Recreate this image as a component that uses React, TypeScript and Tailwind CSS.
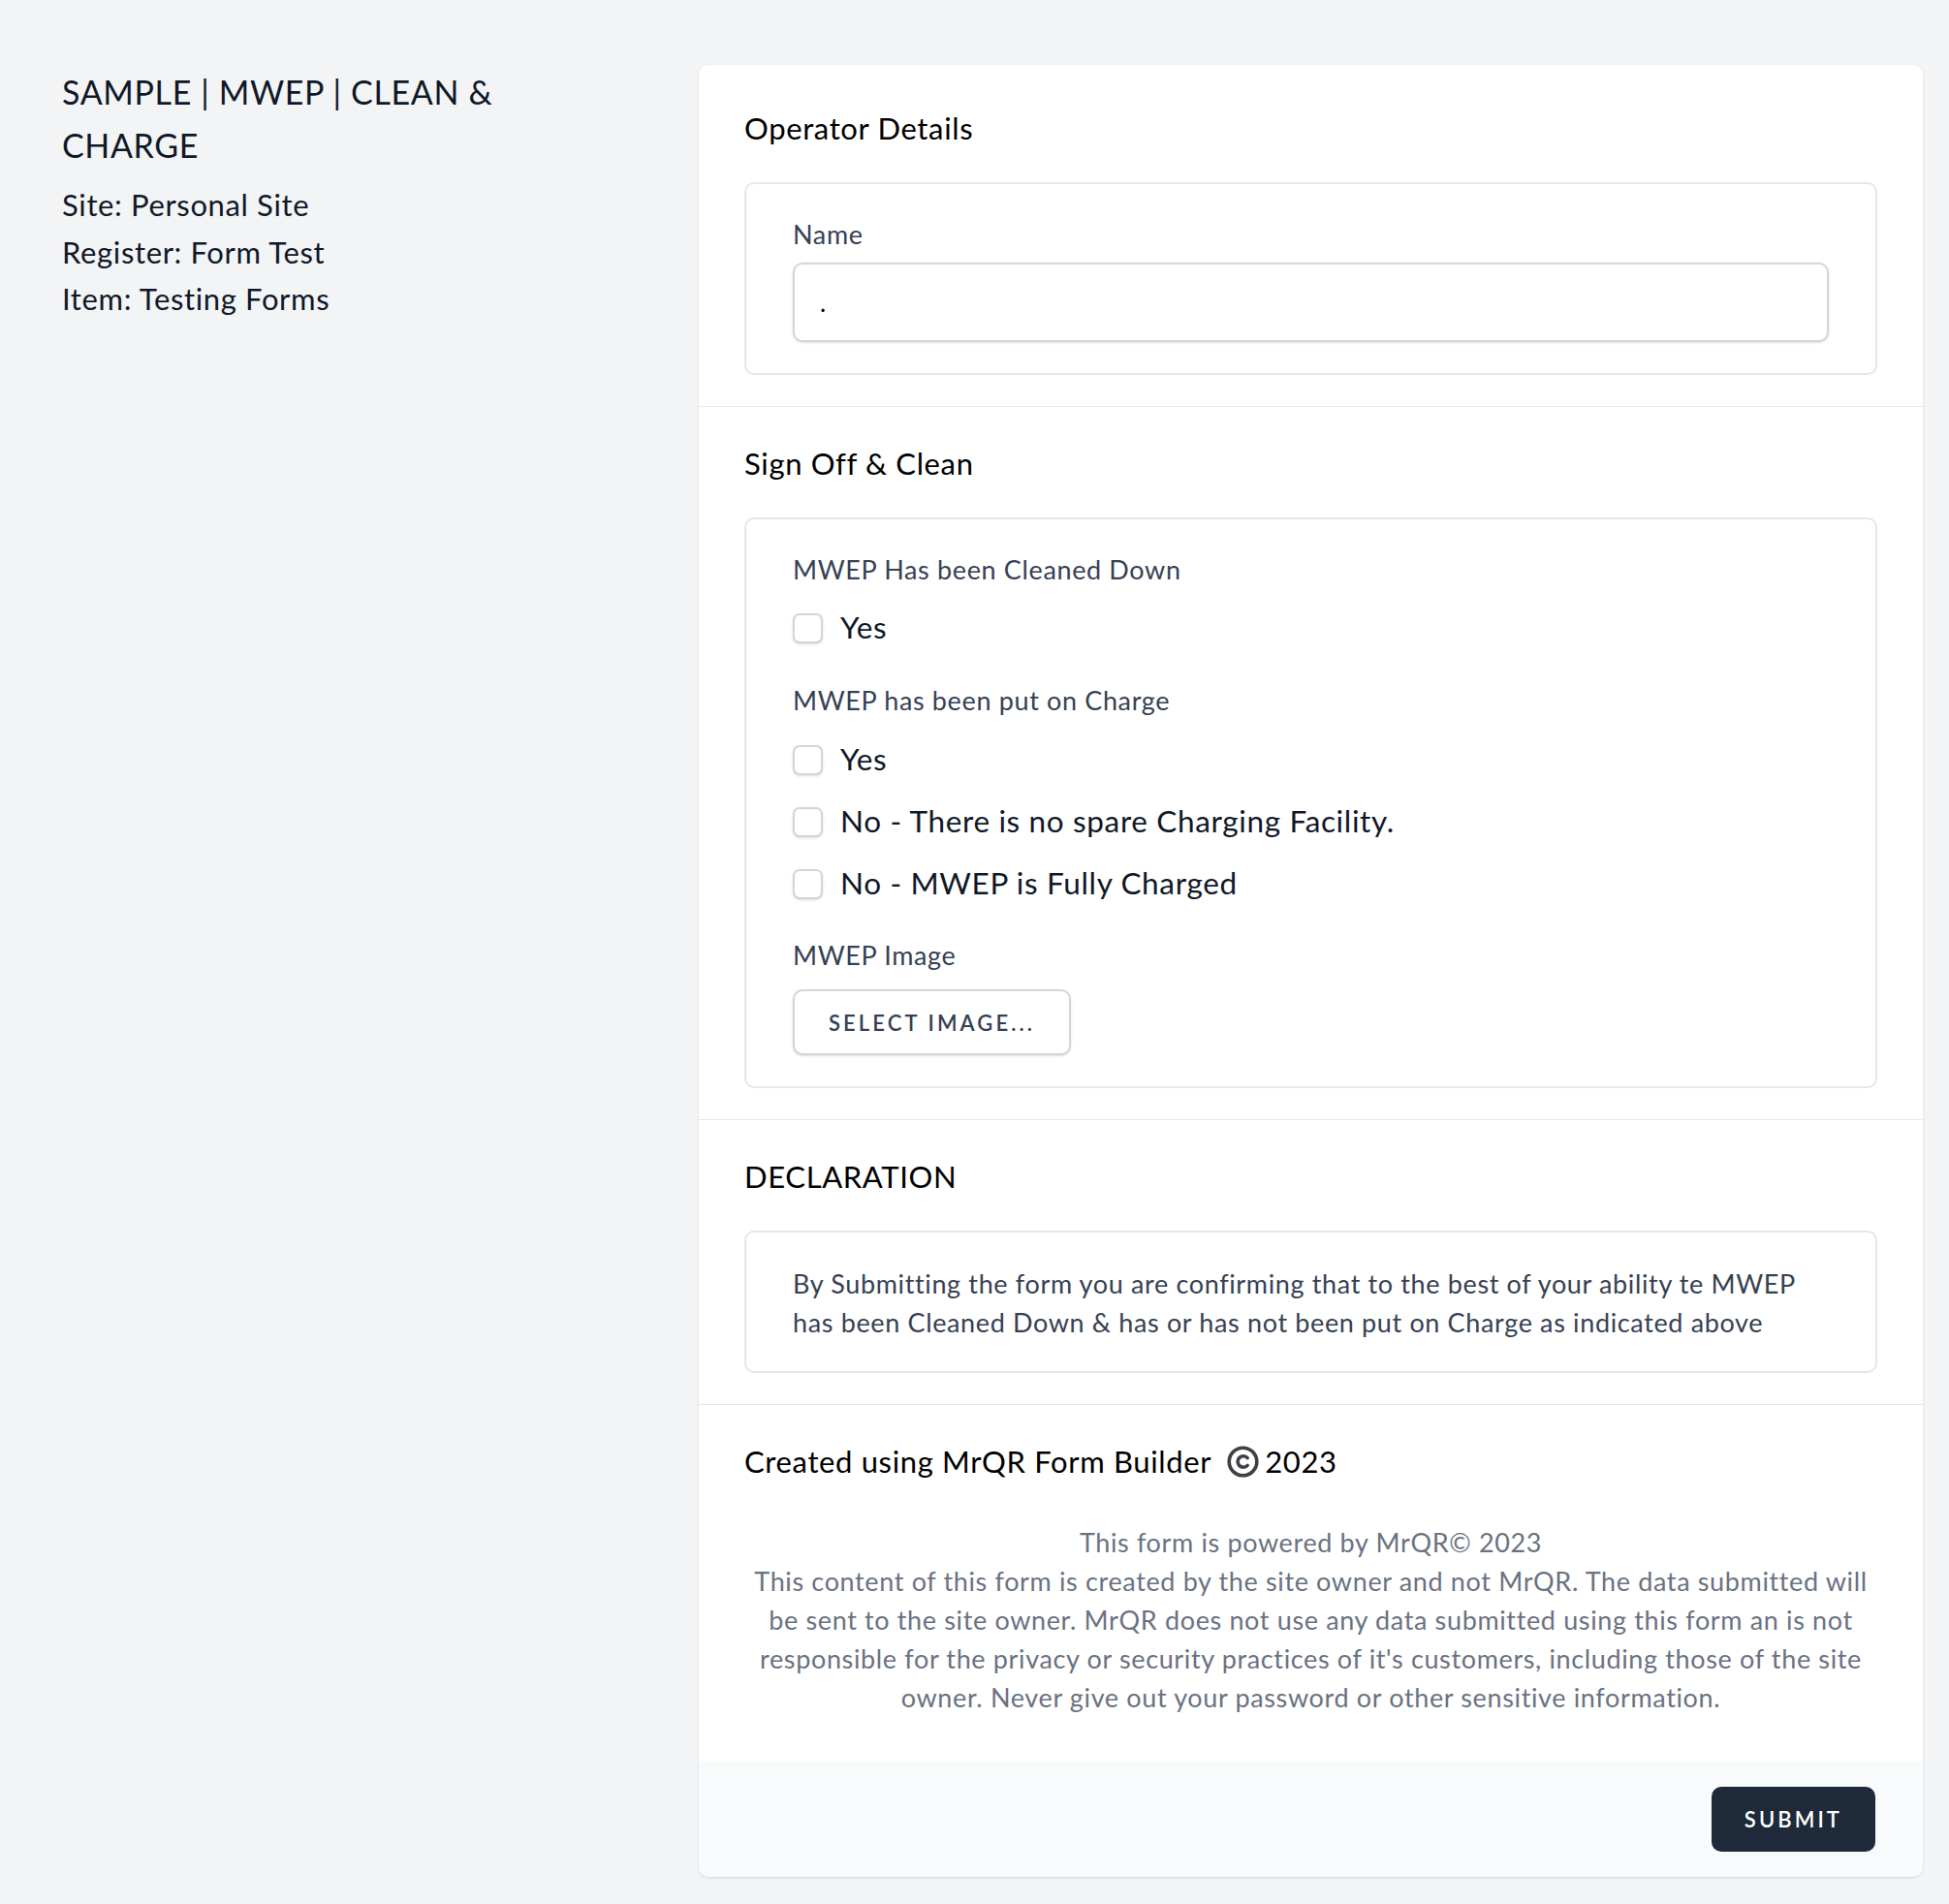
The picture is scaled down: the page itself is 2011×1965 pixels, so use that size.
const Copyright = () => (
  <svg viewBox="0 0 24 24" className="h-[33px] w-[33px] text-[#3f3f46]" fill="none" stroke="currentColor" strokeWidth="2.6">
    <circle cx="12" cy="12" r="10.4" />
    <path d="M15.4 9.2a4.2 4.2 0 1 0 0 5.6" strokeLinecap="round" />
  </svg>
);

const Checkbox = ({ label }: { label: string }) => (
  <label className="flex h-[40px] items-center gap-[18px]">
    <span className="h-[31px] w-[31px] rounded-[7px] border-2 border-gray-300 bg-white shadow-sm" />
    <span className="text-[31.5px] text-gray-900">{label}</span>
  </label>
);

const Section = ({ title, first, children }: { title: React.ReactNode; first?: boolean; children: React.ReactNode }) => (
  <section className={`border-b border-gray-200 px-[47px] ${first ? "pt-[47px]" : "pt-[40px]"} pb-[32px]`}>
    <h2 className="flex h-[36px] items-center text-[31px] text-black">{title}</h2>
    <div className="mt-[38px]">{children}</div>
  </section>
);

const Box = ({ children, tight }: { children: React.ReactNode; tight?: boolean }) => (
  <div className={`rounded-[10px] border-2 border-gray-200 px-[48px] ${tight ? "pt-[33px] pb-[30px]" : "pt-[35px] pb-[32px]"}`}>{children}</div>
);

const Label = ({ children }: { children: React.ReactNode }) => (
  <div className="flex h-[35px] items-center text-[27px] text-gray-700">{children}</div>
);

export default function App() {
  return (
    <div
      className="flex min-h-screen items-start gap-[97px] bg-gray-100 pl-[64px] pr-[27px] pt-[67px] pb-[28px] tracking-[0.04em]"
      style={{ fontFamily: "Lato, 'Liberation Sans', sans-serif" }}
    >
      <aside className="w-[560px] shrink-0">
        <h1 className="text-[34px] leading-[55px] text-gray-900">SAMPLE | MWEP | CLEAN &amp; CHARGE</h1>
        <div className="mt-[10px] text-[31px] leading-[48.5px] text-gray-900">
          <p>Site: Personal Site</p>
          <p>Register: Form Test</p>
          <p>Item: Testing Forms</p>
        </div>
      </aside>

      <main className="flex-1 overflow-hidden rounded-[10px] bg-white shadow">
        <Section title="Operator Details" first>
          <Box>
            <Label>Name</Label>
            <div className="mt-[11px] flex h-[82px] items-center rounded-[10px] border-2 border-gray-300 px-[26px] text-[26px] text-black shadow-sm">
              .
            </div>
          </Box>
        </Section>

        <Section title="Sign Off & Clean">
          <Box>
            <Label>MWEP Has been Cleaned Down</Label>
            <div className="mt-[22px]">
              <Checkbox label="Yes" />
            </div>
            <div className="mt-[38px]">
              <Label>MWEP has been put on Charge</Label>
            </div>
            <div className="mt-[23px] flex flex-col gap-[24px]">
              <Checkbox label="Yes" />
              <Checkbox label="No - There is no spare Charging Facility." />
              <Checkbox label="No - MWEP is Fully Charged" />
            </div>
            <div className="mt-[37px]">
              <Label>MWEP Image</Label>
            </div>
            <button className="mt-[17px] h-[68px] rounded-[10px] border-2 border-gray-300 bg-white px-[35px] text-[22px] font-semibold tracking-[0.14em] text-gray-700 shadow-sm">
              SELECT IMAGE...
            </button>
          </Box>
        </Section>

        <Section title="DECLARATION">
          <Box tight>
            <p className="text-[27px] leading-[40px] text-gray-700">
              By Submitting the form you are confirming that to the best of your ability te MWEP has been Cleaned Down &amp; has or has not been put on Charge as indicated above
            </p>
          </Box>
        </Section>

        <section className="px-[47px] pt-[40px] pb-[46px]">
          <h2 className="flex h-[36px] items-center text-[31px] text-black">
            Created using MrQR Form Builder
            <span className="ml-[16px] mr-[6px]">
              <Copyright />
            </span>
            2023
          </h2>
          <div className="mt-[46px] text-center text-[27px] leading-[40px] text-gray-500">
            <p>This form is powered by MrQR© 2023</p>
            <p>
              This content of this form is created by the site owner and not MrQR. The data submitted will be sent to the site owner. MrQR does not use any data submitted using this form an is not responsible for the privacy or security practices of it's customers, including those of the site owner. Never give out your password or other sensitive information.
            </p>
          </div>
        </section>

        <footer className="flex justify-end bg-gray-50 px-[49px] py-[26px]">
          <button className="h-[67px] rounded-[10px] bg-gray-800 px-[34px] text-[22px] font-semibold tracking-[0.14em] text-white">
            SUBMIT
          </button>
        </footer>
      </main>
    </div>
  );
}
